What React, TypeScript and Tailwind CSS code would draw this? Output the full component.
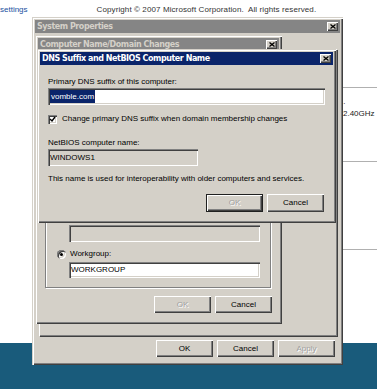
import React from "react";

const frame =
  "shadow-[inset_1px_1px_#d4d0c8,inset_2px_2px_#ffffff,inset_-1px_-1px_#404040,inset_-2px_-2px_#808080]";
const bevel =
  "shadow-[inset_1px_1px_#ffffff,inset_-1px_-1px_#404040,inset_-2px_-2px_#808080]";
const sunken =
  "shadow-[inset_1px_1px_#808080,inset_2px_2px_#404040,inset_-1px_-1px_#ffffff,inset_-2px_-2px_#d4d0c8]";
const font = "font-['Liberation_Sans',Arial,sans-serif] text-[8px] leading-[10px]";
const body = `${font} text-black`;

const CloseBox = () => (
  <div className={`flex h-[9px] w-[11px] items-center justify-center bg-[#d4d0c8] ${bevel}`}>
    <svg width="6" height="5" viewBox="0 0 6 5">
      <path d="M0.5 0.5 L5.5 4.5 M5.5 0.5 L0.5 4.5" stroke="#000" strokeWidth="1.3" fill="none" />
    </svg>
  </div>
);

const TitleBar = ({ title, active }: { title: string; active?: boolean }) => (
  <div
    className={`flex h-[13px] shrink-0 items-center justify-between pl-[2px] pr-[2px] ${
      active ? "bg-[#0a246a] text-white" : "bg-[#858585] text-[#d4d0c8]"
    }`}
  >
    <span className="font-['DejaVu_Sans',Verdana,sans-serif] text-[8px] font-bold leading-none tracking-[-0.45px]">
      {title}
    </span>
    <CloseBox />
  </div>
);

const Button = ({
  label,
  disabled,
  isDefault,
  h = "h-[17px]",
}: {
  label: string;
  disabled?: boolean;
  isDefault?: boolean;
  h?: string;
}) => (
  <div
    className={`flex w-[57px] items-center justify-center bg-[#d4d0c8] ${h} ${
      isDefault ? "border border-[#202020]" : ""
    } ${bevel}`}
  >
    <span
      className={`${font} ${
        disabled ? "text-[#a0a0a0] [text-shadow:1px_1px_0_#ffffff]" : "text-black"
      }`}
    >
      {label}
    </span>
  </div>
);

const Field = ({
  children,
  className = "",
  gray,
}: {
  children?: React.ReactNode;
  className?: string;
  gray?: boolean;
}) => (
  <div
    className={`flex items-center pl-[2px] ${gray ? "bg-[#d4d0c8]" : "bg-white"} ${sunken} ${className}`}
  >
    {children}
  </div>
);

export default function App() {
  return (
    <div className="relative h-[389px] w-[377px] overflow-hidden bg-white">
      {/* desktop page behind the dialogs */}
      <div className="flex h-[343px] flex-col">
        <div className={`flex h-[20px] items-center ${font}`}>
          <span className="text-[#2050a0]">settings</span>
          <span className="ml-[69px] text-[#333] tracking-[0.1px]">
            Copyright © 2007 Microsoft Corporation.&nbsp; All rights reserved.
          </span>
        </div>
        <div className="ml-[342px] flex flex-col">
          <div className="mt-[67px] h-px bg-[#b0b0b0]" />
          <div className={`mt-[11px] pl-[1px] ${font} text-[#222]`}>· 2.40GHz</div>
          <div className="mt-[42px] h-px bg-[#b0b0b0]" />
          <div className="mt-[87px] h-px bg-[#b0b0b0]" />
        </div>
      </div>
      <div className="h-[46px] bg-[#195b7b]" />

      {/* System Properties */}
      <div className={`absolute left-[32px] top-[17px] flex h-[348px] w-[311px] flex-col bg-[#d4d0c8] p-[3px] ${frame}`}>
        <TitleBar title="System Properties" />
        <div className="mt-[16px] ml-[4px] mr-[3px] flex-1 border-l border-t border-white shadow-[inset_-1px_-1px_#808080,1px_1px_#404040]" />
        <div className="mt-[4px] mb-[5px] flex justify-end gap-[4px] pr-[5px]">
          <Button label="OK" />
          <Button label="Cancel" />
          <Button label="Apply" disabled />
        </div>
      </div>

      {/* Computer Name/Domain Changes */}
      <div className={`absolute left-[35px] top-[35px] flex h-[289px] w-[247px] flex-col bg-[#d4d0c8] p-[3px] ${frame}`}>
        <TitleBar title="Computer Name/Domain Changes" />
        <div className="mt-[20px] ml-[7px] mr-[8px] flex flex-1 flex-col justify-end border border-[#808080] pb-[9px] shadow-[inset_1px_1px_#ffffff,1px_1px_#ffffff]">
          <Field gray className="ml-[23px] mr-[10px] h-[17px]" />
          <div className="mt-[6px] flex h-[12px] items-center pl-[11px]">
            <div className={`flex h-[9px] w-[9px] items-center justify-center rounded-full bg-white ${sunken}`}>
              <div className="h-[3px] w-[3px] rounded-full bg-black" />
            </div>
            <span className={`ml-[4px] ${body}`}>Workgroup:</span>
          </div>
          <Field className="mt-[2px] ml-[23px] mr-[10px] h-[16px]">
            <span className={body}>WORKGROUP</span>
          </Field>
        </div>
        <div className="mt-[8px] mb-[8px] flex justify-end gap-[4px] pr-[7px]">
          <Button label="OK" disabled />
          <Button label="Cancel" />
        </div>
      </div>

      {/* DNS Suffix and NetBIOS Computer Name */}
      <div className={`absolute left-[37px] top-[49px] flex h-[174px] w-[299px] flex-col bg-[#d4d0c8] p-[3px] ${frame}`}>
        <TitleBar title="DNS Suffix and NetBIOS Computer Name" active />
        <div className="flex flex-col px-[8px]">
          <div className={`mt-[12px] ${body}`}>Primary DNS suffix of this computer:</div>
          <Field className="mt-[1px] h-[17px]">
            <span className={`bg-[#0a246a] px-[1px] ${font} leading-[13px] text-white`}>vomble.com</span>
          </Field>
          <div className="mt-[9px] flex h-[10px] items-center">
            <div className={`flex h-[9px] w-[9px] items-center justify-center bg-white ${sunken}`}>
              <svg width="7" height="7" viewBox="0 0 7 7">
                <path d="M1 3 L3 5 L6 1" stroke="#000" strokeWidth="1.4" fill="none" />
              </svg>
            </div>
            <span className={`ml-[5px] ${body}`}>
              Change primary DNS suffix when domain membership changes
            </span>
          </div>
          <div className={`mt-[14px] ${body}`}>NetBIOS computer name:</div>
          <Field gray className="mt-[1px] h-[17px] w-[150px]">
            <span className={body}>WINDOWS1</span>
          </Field>
          <div className={`mt-[8px] ${body}`}>
            This name is used for interoperability with older computers and services.
          </div>
          <div className="mt-[10px] flex justify-end gap-[4px] pr-[1px]">
            <Button label="OK" disabled isDefault h="h-[18px]" />
            <Button label="Cancel" h="h-[18px]" />
          </div>
        </div>
      </div>
    </div>
  );
}
